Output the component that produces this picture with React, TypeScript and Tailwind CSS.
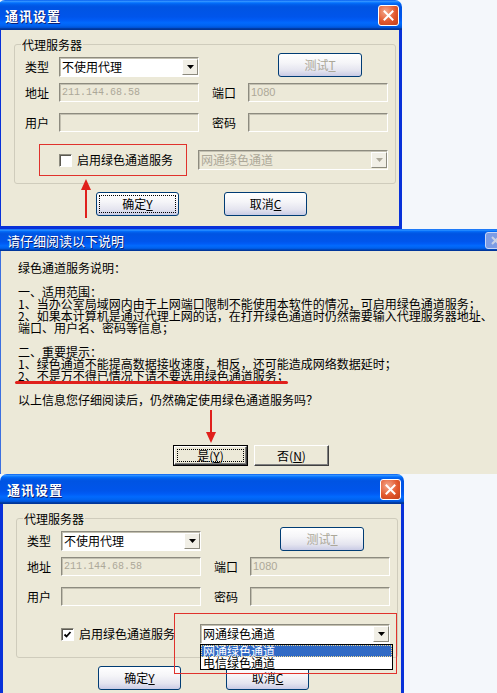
import React from "react"

const titleGrad =
  "bg-[linear-gradient(to_bottom,#0058ee_0%,#3593ff_4%,#288eff_6%,#127dff_8%,#036ffc_10%,#0262ee_14%,#0057e5_20%,#0054e3_24%,#0055eb_56%,#005bf5_66%,#026afe_76%,#0062ef_86%,#0052d6_92%,#0040ab_94%,#003092_100%)]"

const sunken =
  "border border-t-[#8d8b7f] border-l-[#8d8b7f] border-b-white border-r-white shadow-[inset_1px_1px_0_#c3c0b1]"

const xpBtn =
  "h-[24px] rounded-[3px] border border-[#003c74] bg-[linear-gradient(to_bottom,#ffffff_0%,#f5f5f8_40%,#e4e4ef_75%,#c9cbe5_100%)] flex items-center justify-center text-[12px] leading-none"

function CloseBtn() {
  return (
    <div className="w-[21px] h-[21px] rounded-[3px] border border-white bg-[radial-gradient(circle_at_35%_30%,#f4a88c,#e2582d_55%,#c23e18)] flex items-center justify-center">
      <svg width="11" height="11" viewBox="0 0 11 11">
        <path d="M1.5 1.5L9.5 9.5M9.5 1.5L1.5 9.5" stroke="white" strokeWidth="2" strokeLinecap="square" />
      </svg>
    </div>
  )
}

function Tri({ color }: { color: string }) {
  return (
    <svg width="7" height="4" viewBox="0 0 7 4">
      <path d="M0 0H7L3.5 4Z" fill={color} />
    </svg>
  )
}

function Combo({
  text,
  disabled,
  className = "",
  children,
}: {
  text: string
  disabled?: boolean
  className?: string
  children?: React.ReactNode
}) {
  return (
    <div
      className={`relative h-[20px] flex items-center ${sunken} ${
        disabled ? "bg-[#ece9d8] text-[#aca899]" : "bg-white text-black"
      } ${className}`}
    >
      <span className="flex-1 pl-[2px] text-[12px] leading-none">{text}</span>
      <div className="w-[16px] h-[16px] flex items-center justify-center bg-[#f1efe6] border border-t-white border-l-white border-b-[#8c8a7e] border-r-[#8c8a7e]">
        <Tri color={disabled ? "#aca899" : "#000"} />
      </div>
      {children}
    </div>
  )
}

function Edit({ children }: { children?: React.ReactNode }) {
  return (
    <div className={`w-[140px] h-[19px] bg-[#ece9d8] flex items-center pl-[2px] text-[#aca899] ${sunken}`}>
      {children}
    </div>
  )
}

function CheckBox({ checked }: { checked?: boolean }) {
  return (
    <div className="w-[13px] h-[13px] bg-white border border-t-[#8d8b7f] border-l-[#8d8b7f] border-b-white border-r-white shadow-[inset_1px_1px_0_#5a5850] flex items-center justify-center">
      {checked && (
        <svg width="9" height="9" viewBox="0 0 9 9">
          <path d="M1.5 4.5L3.5 6.5L7.5 2" stroke="#000" strokeWidth="1.8" fill="none" />
        </svg>
      )}
    </div>
  )
}

function SettingsDialog({ open }: { open?: boolean }) {
  return (
    <div className={`w-[404px] h-[229px] shrink-0 flex flex-col ${open ? "" : "-ml-[2px]"}`}>
      <div className={`h-[30px] rounded-t-[7px] ${titleGrad} flex items-center justify-between pl-[7px] pr-[3px]`}>
        <span className="text-white font-bold text-[13px] leading-none tracking-[1px] [text-shadow:1px_1px_0_#0a1f74]">
          通讯设置
        </span>
        <CloseBtn />
      </div>
      <div className="flex-1 bg-[#ece9d8] border-x-[3px] border-b-[3px] border-[#0831d9] pl-[13px] pr-[3px] pt-[14px] text-[12px] leading-none">
        {/* group box */}
        <div className="relative border border-[#cfccbc] rounded-[3px] pl-[10px] pt-[8px] pb-[13px]">
          <span className="absolute -top-[7px] left-[6px] px-[1px] bg-[#ece9d8] leading-[14px]">代理服务器</span>

          <div className="flex items-end h-[24px]">
            <div className="flex items-center h-[20px]">
              <span className="w-[34px]">类型</span>
              <Combo text="不使用代理" className="w-[140px]" />
            </div>
            <div className={`${xpBtn} w-[84px] ml-[79px] text-[#aca899]`}>
              测试<span className="underline">T</span>
            </div>
          </div>

          <div className="mt-[6px] flex items-center h-[19px]">
            <span className="w-[34px]">地址</span>
            <Edit>
              <span className="font-['Liberation_Mono',monospace] text-[10px]">211.144.68.58</span>
            </Edit>
            <span className="w-[36px] ml-[13px]">端口</span>
            <Edit>
              <span className="font-['Liberation_Sans',sans-serif] text-[11px]">1080</span>
            </Edit>
          </div>

          <div className="mt-[11px] flex items-center h-[19px]">
            <span className="w-[34px]">用户</span>
            <Edit />
            <span className="w-[36px] ml-[13px]">密码</span>
            <Edit />
          </div>

          <div className="mt-[18px] relative flex items-center h-[20px]">
            <div className="w-[173px] pl-[34px] flex items-center gap-[5px]">
              <CheckBox checked={open} />
              <span>启用绿色通道服务</span>
            </div>
            {open ? (
              <Combo text="网通绿色通道" className="w-[190px]">
                <div className="absolute left-[-1px] top-[19px] w-[193px] border border-black bg-white z-10">
                  <div className="h-[12px] leading-[12px] bg-[#316ac5] text-white pl-[2px] outline-1 outline-dotted outline-offset-[-1px] outline-[#f0d890]">
                    网通绿色通道
                  </div>
                  <div className="h-[12px] leading-[12px] pl-[2px]">电信绿色通道</div>
                </div>
              </Combo>
            ) : (
              <Combo text="网通绿色通道" disabled className="w-[190px]" />
            )}

            {open ? (
              <div className="absolute left-[147px] -top-[11px] w-[223px] h-[61px] border border-[#e0322c] z-20" />
            ) : (
              <>
                <div className="absolute left-[14px] -top-[6px] w-[148px] h-[32px] border border-[#e0322c]" />
                <svg className="absolute left-[56px] top-[29px]" width="10" height="39" viewBox="0 0 10 39">
                  <path d="M5 0L10 11H0Z" fill="#e0201c" />
                  <path d="M5 10V39" stroke="#e0201c" strokeWidth="2" />
                </svg>
              </>
            )}
          </div>
        </div>

        {/* buttons */}
        <div className="mt-[8px] flex pl-[82px] gap-[45px]">
          <div className={`${xpBtn} w-[83px] ${open ? "" : "outline-1 outline-dotted outline-black outline-offset-[-4px]"}`}>
            确定<span className="underline">Y</span>
          </div>
          <div className={`${xpBtn} w-[83px]`}>
            取消<span className="underline">C</span>
          </div>
        </div>
      </div>
    </div>
  )
}

const notes = [
  "绿色通道服务说明：",
  "",
  "一、适用范围：",
  "1、当办公室局域网内由于上网端口限制不能使用本软件的情况，可启用绿色通道服务；",
  "2、如果本计算机是通过代理上网的话，在打开绿色通道时仍然需要输入代理服务器地址、",
  "端口、用户名、密码等信息；",
  "",
  "二、重要提示：",
  "1、绿色通道不能提高数据接收速度，相反，还可能造成网络数据延时；",
  "2、不是万不得已情况下请不要选用绿色通道服务；",
  "",
  "以上信息您仔细阅读后，仍然确定使用绿色通道服务吗？",
]

function ConfirmDialog() {
  return (
    <div className="w-[497px] h-[245px] shrink-0 flex flex-col">
      <div className={`h-[22px] ${titleGrad} flex items-center justify-between pl-[7px]`}>
        <span className="text-white text-[13px] leading-none [text-shadow:1px_1px_0_#0a1f74]">请仔细阅读以下说明</span>
        <div className="w-[21px] h-[17px] -mr-[9px] rounded-[3px] border border-[#c8d6f6] bg-[#7d9ce4] flex items-center justify-center">
          <svg width="9" height="9" viewBox="0 0 9 9">
            <path d="M1 1L8 8M8 1L1 8" stroke="#c9d2e6" strokeWidth="2" />
          </svg>
        </div>
      </div>
      <div className="flex-1 bg-[#ece9d8] border-l border-[#3b6fe0] pl-[17px] pt-[11px] text-[12px]">
        {notes.map((line, i) => (
          <div key={i} className="relative h-[12px] leading-[12px] whitespace-nowrap">
            {line}
            {i === 9 && <div className="absolute -left-[3px] top-[11px] w-[273px] h-[3px] rounded-full bg-[#e0201c]" />}
          </div>
        ))}

        <div className="mt-[39px] ml-[155px] flex gap-[6px]">
          <div className="relative w-[75px] h-[21px] border border-black">
            <div className="h-full border border-t-white border-l-white border-b-[#404040] border-r-[#404040] shadow-[inset_-1px_-1px_0_#808080] flex items-center justify-center leading-none outline-1 outline-dotted outline-black outline-offset-[-4px]">
              是(<span className="underline">Y</span>)
            </div>
            <svg className="absolute left-[32px] -top-[36px]" width="10" height="33" viewBox="0 0 10 33">
              <path d="M5 0V23" stroke="#e0201c" strokeWidth="2" />
              <path d="M0 22H10L5 33Z" fill="#e0201c" />
            </svg>
          </div>
          <div className="w-[75px] h-[21px] border border-t-white border-l-white border-b-[#404040] border-r-[#404040] shadow-[inset_-1px_-1px_0_#808080] flex items-center justify-center leading-none">
            否(<span className="underline">N</span>)
          </div>
        </div>
      </div>
    </div>
  )
}

export default function App() {
  return (
    <div className="w-[497px] h-[693px] overflow-hidden bg-[#f4f7fb] flex flex-col text-black font-['Noto_Sans_CJK_SC','Noto_Sans',sans-serif]">
      <SettingsDialog />
      <ConfirmDialog />
      <SettingsDialog open />
    </div>
  )
}
